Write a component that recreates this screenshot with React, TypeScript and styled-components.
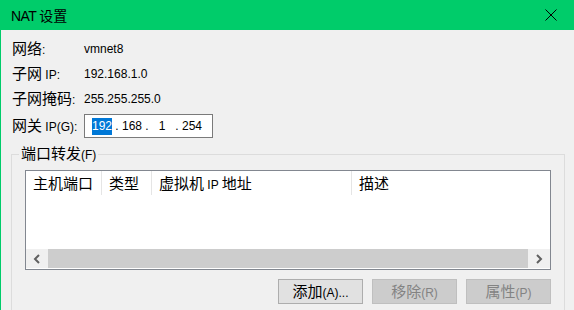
import * as React from 'react';
import styled, { createGlobalStyle } from 'styled-components';

const GlobalStyle = createGlobalStyle`
  html, body {
    margin: 0;
    padding: 0;
    background: #f0f0f0;
  }
  body {
    font-family: 'Liberation Sans', 'Noto Sans CJK SC', sans-serif;
    font-size: 12px;
    color: #000;
  }
`;

const Window = styled.div`
  width: 574px;
  height: 310px;
  box-sizing: border-box;
  border-left: 1px solid #00cc6a;
  background: #f0f0f0;
  overflow: hidden;
  display: flex;
  flex-direction: column;
`;

const TitleBar = styled.div`
  height: 30px;
  flex: 0 0 30px;
  background: #00cc6a;
  display: flex;
  align-items: center;
  justify-content: space-between;
  padding: 0 0 0 10px;
`;

const Title = styled.div`
  font-size: 14px;
  letter-spacing: -0.6px;
  line-height: 30px;
  white-space: nowrap;
`;

const CloseButton = styled.div`
  width: 46px;
  height: 30px;
  display: flex;
  align-items: center;
  justify-content: center;
`;

// CJK text in the dialog is set a little larger than the latin text
const Han = styled.span<{ $size?: number }>`
  font-family: 'Noto Sans CJK SC', sans-serif;
  font-size: ${(p) => p.$size ?? 15}px;
  letter-spacing: 0;
`;

const Body = styled.div`
  flex: 1;
  padding: 6px 9px 0 10px;
  display: flex;
  flex-direction: column;
`;

const Row = styled.div<{ $gap?: number; $h?: number }>`
  display: flex;
  align-items: center;
  height: ${(p) => p.$h ?? 25}px;
  margin-top: ${(p) => p.$gap ?? 0}px;
  padding-left: 1px;
`;

const Label = styled.div`
  width: 72px;
  flex: 0 0 72px;
  white-space: nowrap;
  line-height: 24px;
`;

const Value = styled.div`
  white-space: nowrap;
  line-height: 24px;
`;

const IpBox = styled.div`
  width: 129px;
  height: 24px;
  box-sizing: border-box;
  border: 1px solid #7a7a7a;
  background: #fff;
  display: flex;
  align-items: center;
  padding-left: 6px;
`;

const Octet = styled.span`
  width: 22px;
  text-align: center;
`;

const Dot = styled.span`
  width: 8px;
  text-align: center;
`;

const Selected = styled.span`
  background: #0078d7;
  color: #fff;
  padding: 1px 0 2px;
`;

const Group = styled.fieldset`
  margin: 6px 0 0 0;
  padding: 6px 13px 0 13px;
  border: 1px solid #dcdcdc;
  border-bottom: none;
  flex: 1;
  min-width: 0;
`;

const Legend = styled.legend`
  margin-left: -6px;
  padding: 0 2px;
  line-height: 18px;
  white-space: nowrap;
`;

const ListView = styled.div`
  height: 100px;
  box-sizing: border-box;
  border: 1px solid #828790;
  background: #fff;
  display: flex;
  flex-direction: column;
`;

const Header = styled.div`
  height: 24px;
  display: flex;
`;

const HeaderCell = styled.div<{ $w?: number }>`
  ${(p) => (p.$w ? `width: ${p.$w}px; flex: 0 0 ${p.$w}px;` : 'flex: 1;')}
  box-sizing: border-box;
  padding-left: 7px;
  line-height: 24px;
  border-right: 1px solid #e5e5e5;
  white-space: nowrap;
  &:last-child {
    border-right: none;
  }
`;

const ListBody = styled.div`
  flex: 1;
`;

const ScrollBar = styled.div`
  height: 19px;
  margin-bottom: 1px;
  display: flex;
  background: #f0f0f0;
`;

const ScrollArrow = styled.div`
  width: 22px;
  flex: 0 0 22px;
  display: flex;
  align-items: center;
  justify-content: center;
`;

const Thumb = styled.div`
  flex: 1;
  background: #cdcdcd;
`;

const Buttons = styled.div`
  display: flex;
  justify-content: flex-end;
  gap: 9px;
  margin-top: 9px;
`;

const Button = styled.button<{ $disabled?: boolean }>`
  width: 85px;
  height: 25px;
  box-sizing: border-box;
  border: 1px solid ${(p) => (p.$disabled ? '#bfbfbf' : '#adadad')};
  background: ${(p) => (p.$disabled ? '#cccccc' : '#e1e1e1')};
  color: ${(p) => (p.$disabled ? '#838383' : '#000')};
  font-family: 'Liberation Sans', 'Noto Sans CJK SC', sans-serif;
  font-size: 12px;
  line-height: 22px;
  padding: 0;
  text-align: center;
  white-space: nowrap;
`;

function Chevron({ dir }: { dir: 'left' | 'right' }) {
  return (
    <svg width="8" height="10" viewBox="0 0 8 10">
      <path
        d={dir === 'left' ? 'M6 1 L2 5 L6 9' : 'M2 1 L6 5 L2 9'}
        fill="none"
        stroke="#606060"
        strokeWidth="2"
      />
    </svg>
  );
}

function IpAddress() {
  return (
    <IpBox>
      <Octet>
        <Selected>192</Selected>
      </Octet>
      <Dot>.</Dot>
      <Octet>168</Octet>
      <Dot>.</Dot>
      <Octet>1</Octet>
      <Dot>.</Dot>
      <Octet>254</Octet>
    </IpBox>
  );
}

export default function App() {
  return (
    <>
      <GlobalStyle />
      <Window>
        <TitleBar>
          <Title>
            NAT <Han $size={14}>设置</Han>
          </Title>
          <CloseButton>
            <svg width="12" height="12" viewBox="0 0 12 12">
              <path d="M0.5 0.5 L11.5 11.5 M11.5 0.5 L0.5 11.5" stroke="#000" strokeWidth="1" />
            </svg>
          </CloseButton>
        </TitleBar>
        <Body>
          <Row>
            <Label>
              <Han>网络</Han>:
            </Label>
            <Value>vmnet8</Value>
          </Row>
          <Row>
            <Label>
              <Han>子网</Han> IP:
            </Label>
            <Value>192.168.1.0</Value>
          </Row>
          <Row>
            <Label>
              <Han>子网掩码</Han>:
            </Label>
            <Value>255.255.255.0</Value>
          </Row>
          <Row $gap={3} $h={24}>
            <Label>
              <Han>网关</Han> IP(G):
            </Label>
            <IpAddress />
          </Row>
          <Group>
            <Legend>
              <Han>端口转发</Han>(F)
            </Legend>
            <ListView>
              <Header>
                <HeaderCell $w={76}>
                  <Han>主机端口</Han>
                </HeaderCell>
                <HeaderCell $w={50}>
                  <Han>类型</Han>
                </HeaderCell>
                <HeaderCell $w={200}>
                  <Han>虚拟机</Han> IP <Han>地址</Han>
                </HeaderCell>
                <HeaderCell>
                  <Han>描述</Han>
                </HeaderCell>
              </Header>
              <ListBody />
              <ScrollBar>
                <ScrollArrow>
                  <Chevron dir="left" />
                </ScrollArrow>
                <Thumb />
                <ScrollArrow>
                  <Chevron dir="right" />
                </ScrollArrow>
              </ScrollBar>
            </ListView>
            <Buttons>
              <Button>
                <Han>添加</Han>(A)...
              </Button>
              <Button $disabled>
                <Han>移除</Han>(R)
              </Button>
              <Button $disabled>
                <Han>属性</Han>(P)
              </Button>
            </Buttons>
          </Group>
        </Body>
      </Window>
    </>
  );
}
